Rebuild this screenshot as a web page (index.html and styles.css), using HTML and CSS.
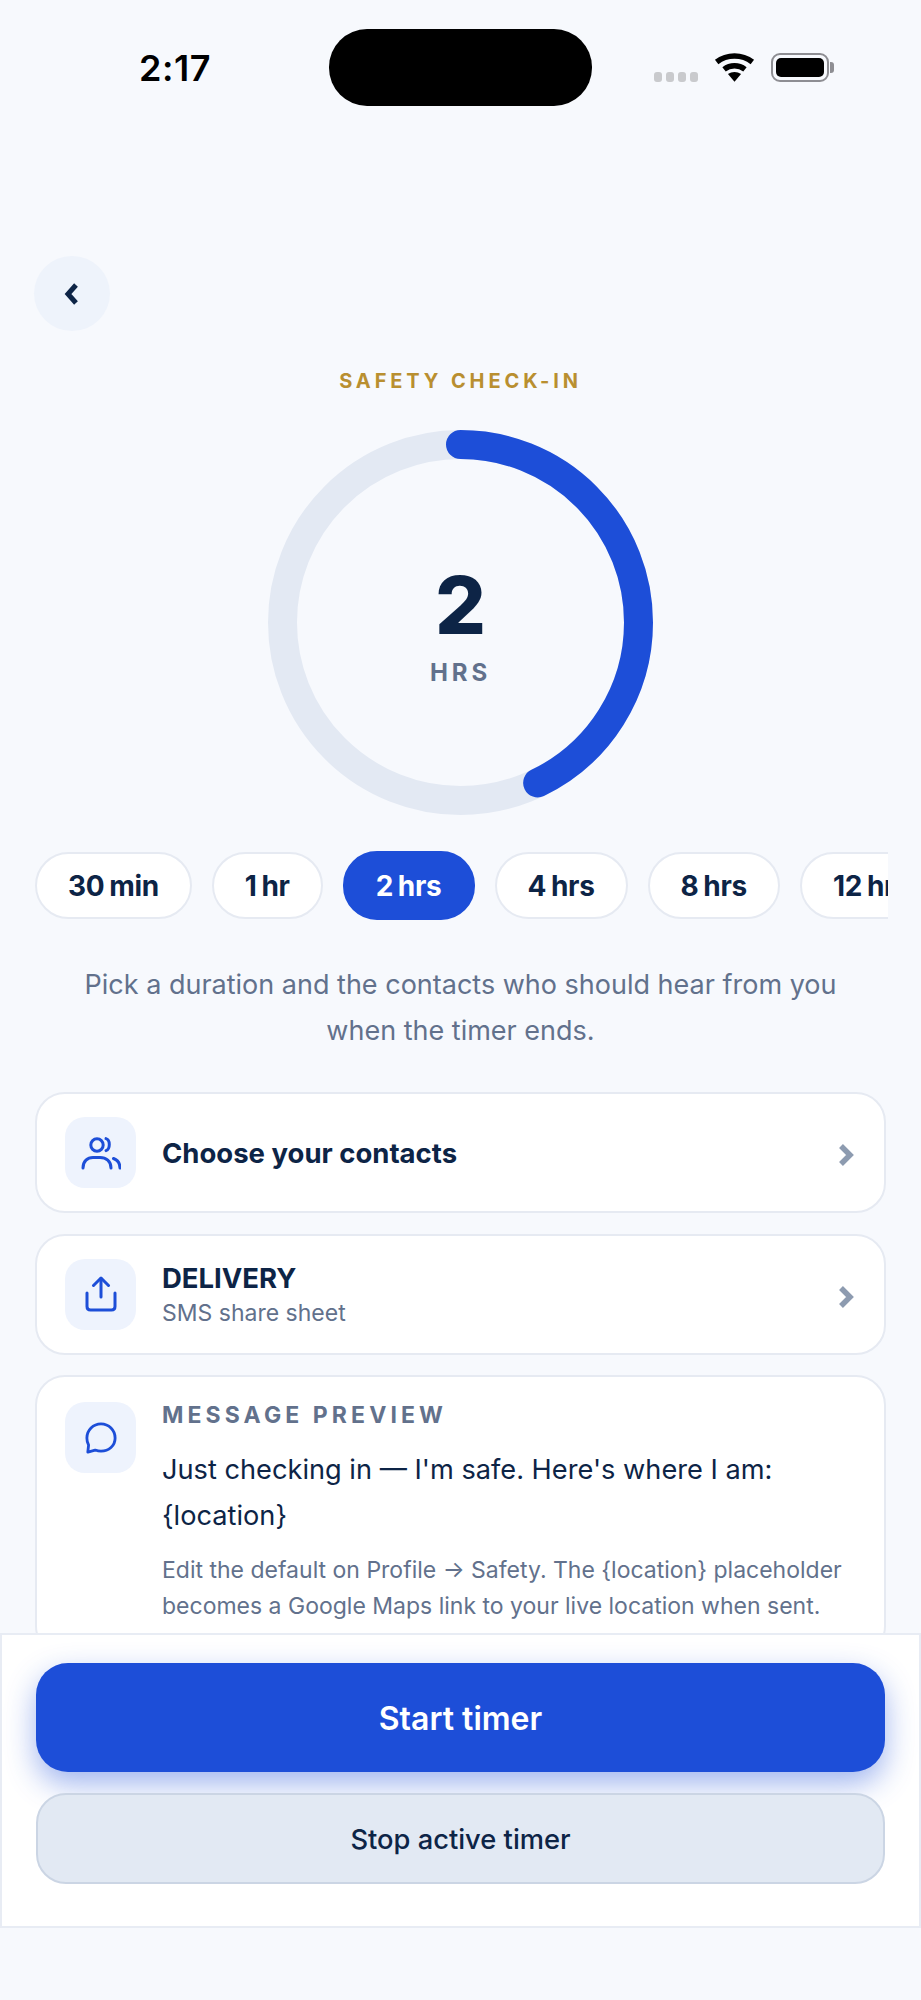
FILE: index.html
```html
<!DOCTYPE html>
<html lang="en">
<head>
<meta charset="utf-8">
<title>Safety check-in</title>
<link rel="stylesheet" href="styles.css">
</head>
<body>
<div class="app">
  <main class="main">
    <header class="status">
      <div class="time">2:17</div>
      <div class="island"></div>
      <div class="indicators">
        <div class="dots"><i></i><i></i><i></i><i></i></div>
        <svg class="wifi" width="41" height="31" viewBox="0 0 40 30"><path d="M2.6 9.6C12.6 1.8 27.4 1.8 37.4 9.6" /><path d="M9.8 16.8C15.8 12.2 24.2 12.2 30.2 16.8" /><path class="wedge" d="M13.6 21.4C17.4 18.6 22.6 18.6 26.4 21.4L20 29Z" /></svg>
        <div class="battery"><div class="battery-fill"></div></div>
        <div class="battery-nub"></div>
      </div>
    </header>

    <button class="back" aria-label="Back">
      <svg width="18" height="24" viewBox="0 0 18 24"><path d="M13 3L5 12L13 21" /></svg>
    </button>

    <div class="eyebrow">SAFETY CHECK-IN</div>

    <div class="ring">
      <svg class="ring-svg" width="385" height="385" viewBox="0 0 385 385">
        <circle class="track" cx="192.5" cy="192.5" r="178" />
        <circle class="progress" cx="192.5" cy="192.5" r="178" pathLength="100" stroke-dasharray="42.86 100" transform="rotate(-90 192.5 192.5)" />
      </svg>
      <div class="ring-text">
        <div class="ring-num">2</div>
        <div class="ring-unit">HRS</div>
      </div>
    </div>

    <div class="chips">
      <div class="chip">30 min</div>
      <div class="chip">1 hr</div>
      <div class="chip active">2 hrs</div>
      <div class="chip">4 hrs</div>
      <div class="chip">8 hrs</div>
      <div class="chip">12 hrs</div>
    </div>

    <p class="hint">Pick a duration and the contacts who should hear from you<br>when the timer ends.</p>

    <section class="cards">
      <div class="card row">
        <div class="icon-box">
          <svg width="40" height="34" viewBox="0 0 40 34"><circle cx="16" cy="9" r="6.2" /><path d="M25 2.6C29.4 3.8 29.4 13 25 14.6" /><path d="M2 32C2 25 6.6 21.5 12 21.5H19C25 21.5 30 25 30 32" /><path d="M32.5 22.5C36.5 24 39 27.5 39 32" /></svg>
        </div>
        <div class="row-title">Choose your contacts</div>
        <svg class="chev" width="16" height="24" viewBox="0 0 16 24"><path d="M3 3L12 12L3 21" /></svg>
      </div>
      <div class="card row">
        <div class="icon-box">
          <svg width="32" height="36" viewBox="0 0 32 36"><path d="M16 21V2.5" /><path d="M8.5 9.5L16 2L23.5 9.5" /><path d="M2 17V30.5C2 32.7 3.3 34 5.5 34H26.5C28.7 34 30 32.7 30 30.5V17" /></svg>
        </div>
        <div class="row-text">
          <div class="row-title">DELIVERY</div>
          <div class="row-sub">SMS share sheet</div>
        </div>
        <svg class="chev" width="16" height="24" viewBox="0 0 16 24"><path d="M3 3L12 12L3 21" /></svg>
      </div>
      <div class="card preview">
        <div class="icon-box">
          <svg width="32" height="32" viewBox="0 0 34 34"><path d="M3 32L3.8 24.5C2.5 22.3 2 19.8 2 17C2 8.7 8.7 2 17 2C25.3 2 32 8.7 32 17C32 25.3 25.3 31 17 31C14.8 31 12.7 30.5 10.8 29.8Z" /></svg>
        </div>
        <div class="preview-body">
          <div class="preview-label">MESSAGE PREVIEW</div>
          <p class="preview-msg">Just checking in — I'm safe. Here's where I am: {location}</p>
          <p class="preview-note">Edit the default on Profile → Safety. The {location} placeholder becomes a Google Maps link to your live location when sent.</p>
        </div>
      </div>
    </section>
  </main>

  <footer class="footer">
    <button class="btn-primary">Start timer</button>
    <button class="btn-secondary">Stop active timer</button>
  </footer>
</div>
</body>
</html>
```

FILE: styles.css
```css
* { box-sizing: border-box; }
html, body { margin: 0; padding: 0; }
body {
  background: #f7f9fd;
  font-family: Inter, "Liberation Sans", sans-serif;
  color: #0d2446;
}
.app { width: 921px; height: 2000px; overflow: hidden; }
.main { height: 1633px; overflow: hidden; }

/* status bar */
.status {
  display: grid;
  grid-template-columns: 329px 263px 1fr;
  align-items: center;
  padding-top: 29px;
}
.time {
  padding-left: 139px;
  font-size: 36px;
  font-weight: 600;
  letter-spacing: 0.5px;
  color: #000;
}
.island { height: 77px; border-radius: 38px; background: #000; }
.indicators { display: flex; align-items: center; padding-left: 62px; }
.dots { display: flex; gap: 4px; margin-top: 19px; margin-right: 16px; }
.dots i { width: 8px; height: 10px; border-radius: 3px; background: #c9cacd; }
.wifi { margin-right: 16px; margin-top: -1px; }
.wifi path { fill: none; stroke: #000; stroke-width: 5.4px; }
.wifi .wedge { fill: #000; stroke: none; }
.battery {
  width: 58px; height: 29px; padding: 3px;
  border: 2.5px solid #8e8e93; border-radius: 9px;
}
.battery-fill { height: 100%; border-radius: 5px; background: #000; }
.battery-nub { width: 4px; height: 11px; margin-left: 1px; border-radius: 0 3px 3px 0; background: #8e8e93; }

/* back */
.back {
  display: flex; align-items: center; justify-content: center;
  width: 76px; height: 75px; margin: 150px 0 0 34px; padding: 0;
  border: 0; border-radius: 50%; background: #eef3fb;
}
.back path { fill: none; stroke: #0d2446; stroke-width: 5px; }

.eyebrow {
  margin-top: 38px;
  text-align: center;
  font-size: 20px; line-height: 24px; font-weight: 700;
  letter-spacing: 3.9px;
  color: #b98f30;
}

/* ring */
.ring {
  display: grid; justify-items: center; align-items: center;
  width: 385px; height: 385px; margin: 37px auto 0;
}
.ring-svg, .ring-text { grid-area: 1 / 1; }
.track, .progress { fill: none; stroke-width: 29px; }
.track { stroke: #e3e9f3; }
.progress { stroke: #1d4ed8; stroke-linecap: round; }
.ring-text { padding-top: 6px; text-align: center; }
.ring-num { font-size: 80px; line-height: 80px; font-weight: 800; }
.ring-unit { margin-top: 14px; font-size: 24px; line-height: 28px; font-weight: 700; letter-spacing: 3.8px; color: #62718c; }

/* chips */
.chips {
  display: flex; align-items: center; gap: 20px;
  width: 853px; height: 69px; margin: 36px 0 0 35px;
  overflow: hidden;
}
.chip {
  flex: none; display: flex; align-items: center;
  height: 67px; padding: 0 31px;
  border: 2px solid #e6eaf2; border-radius: 34px;
  background: #fff;
  font-size: 28px; font-weight: 700; letter-spacing: -0.3px; word-spacing: -1.5px;
}
.chip.active { height: 69px; border-color: #1d4ed8; background: #1d4ed8; color: #fff; }

.hint {
  margin: 42px 0 0;
  text-align: center;
  font-size: 27px; line-height: 46px;
  color: #62718c;
}

/* cards */
.cards { display: flex; flex-direction: column; gap: 20.5px; margin: 38px 35px 0; }
.card { border: 2px solid #e6eaf2; border-radius: 30px; background: #fff; }
.row { display: flex; align-items: center; height: 121px; padding: 0 30px 0 28px; }
.icon-box {
  flex: none; display: flex; align-items: center; justify-content: center;
  width: 71px; height: 71px; margin-right: 26px;
  border-radius: 20px; background: #eef3fd;
}
.icon-box svg path, .icon-box svg circle { fill: none; stroke: #1d4ed8; stroke-width: 3px; stroke-linecap: round; stroke-linejoin: round; }
.row-title { flex: 1; font-size: 27.5px; line-height: 34px; font-weight: 700; }
.row-text { flex: 1; }
.row-sub { margin-top: 3px; font-size: 23px; line-height: 30px; color: #62718c; }
.chev { flex: none; margin-top: 5px; }
.chev path { fill: none; stroke: #8d9bb0; stroke-width: 5.5px; }

.preview { display: flex; align-items: flex-start; padding: 25px 30px 30px 28px; }
.preview-body { flex: 1; margin-top: -2px; }
.preview-label { font-size: 23px; line-height: 30px; font-weight: 700; letter-spacing: 4.1px; color: #62718c; }
.preview-msg { margin: 17px 0 0; font-size: 27.2px; line-height: 46px; }
.preview-note { margin: 14px 0 0; font-size: 23px; line-height: 35.5px; color: #62718c; }

/* footer */
.footer {
  display: flex; flex-direction: column; gap: 21px;
  height: 295px; padding: 28px 34px 0;
  background: #fff;
  border: 2px solid #e8ecf4;
}
.btn-primary, .btn-secondary { flex: none; width: 100%; font-family: inherit; text-align: center; padding: 2px 0 0; }
.btn-primary {
  height: 109px; border: 0; border-radius: 32px;
  background: #1d4ed8; color: #fff;
  font-size: 32px; font-weight: 600;
  box-shadow: 0 12px 30px rgba(29, 78, 216, 0.42);
}
.btn-secondary {
  height: 91px; border: 2px solid #cbd5e4; border-radius: 30px;
  background: #e2e9f3; color: #0d2446;
  font-size: 27.3px; font-weight: 500;
}
```
